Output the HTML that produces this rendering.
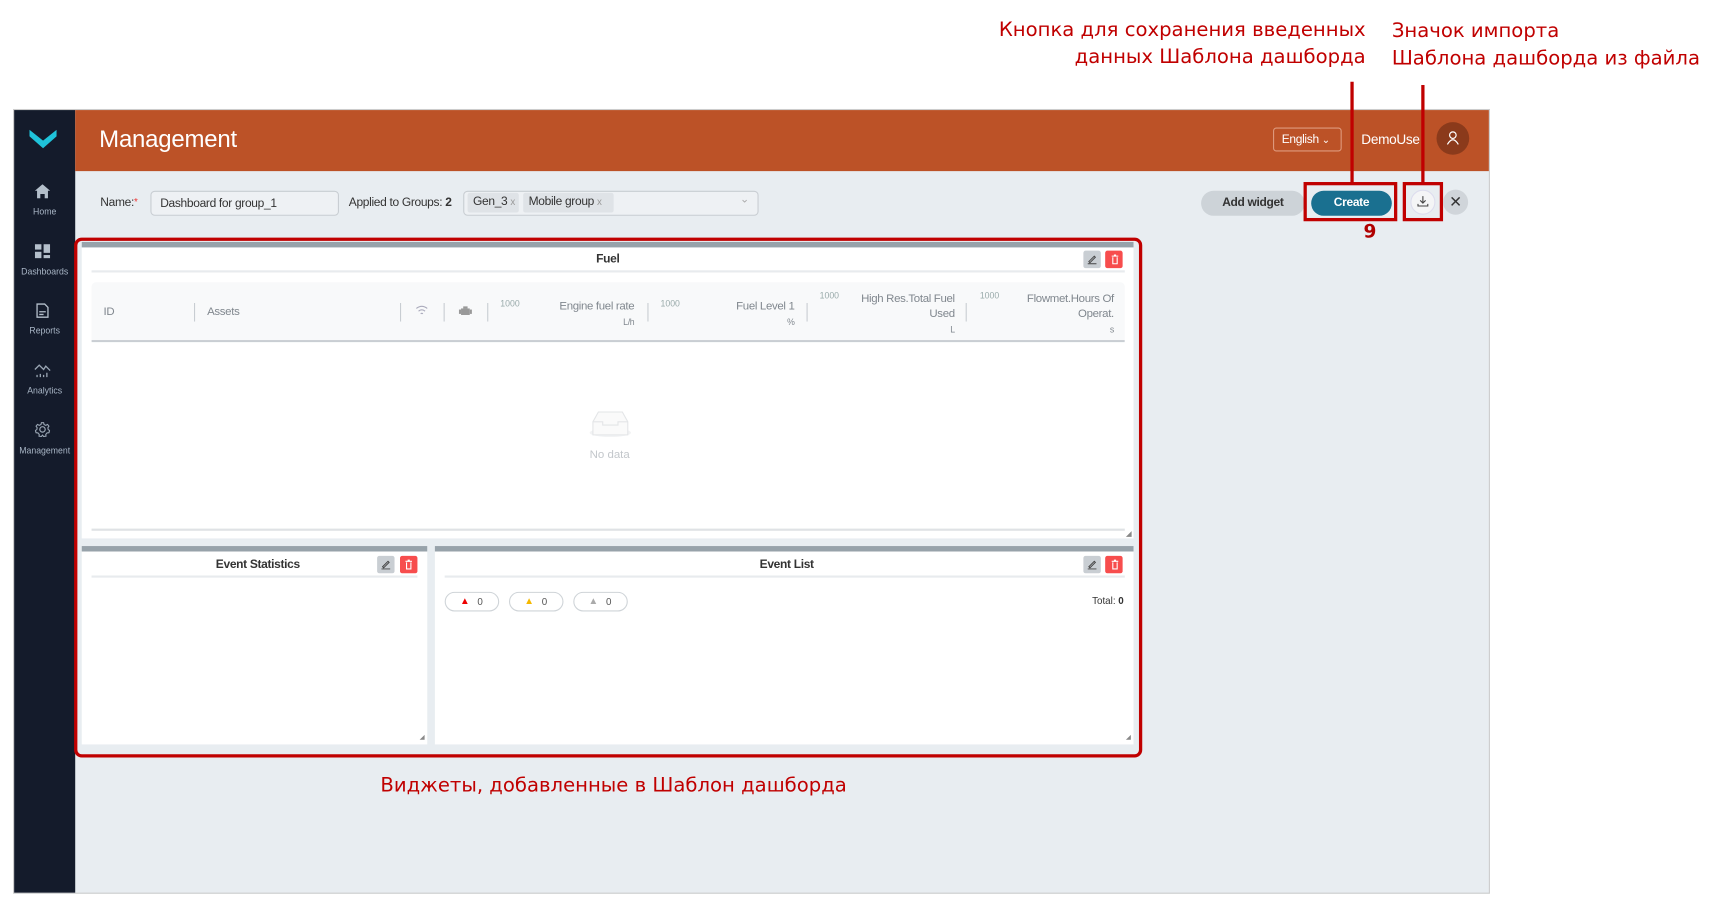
<!DOCTYPE html>
<html><head><meta charset="utf-8"><style>
*{box-sizing:border-box;margin:0;padding:0}
html,body{width:1709px;height:897px;overflow:hidden;background:#fff}
#w{position:absolute;left:0;top:0;width:1568px;height:823px;transform:scale(1.08992);transform-origin:0 0;font-family:"Liberation Sans",sans-serif;}
.a{position:absolute}
.ann{position:absolute;font-family:"DejaVu Sans","Liberation Sans",sans-serif;font-size:18px;color:#c00000;line-height:25px;white-space:nowrap}
.ui{font-size:11px;color:#333;letter-spacing:-0.3px}
.nav{position:absolute;left:13px;width:56px;text-align:center;color:#a9b6c6;font-size:8px}
.wd{position:absolute;background:#fff;border-top:5px solid #97a2aa}
.tt{position:absolute;font-size:11px;font-weight:bold;color:#333;letter-spacing:-0.3px}
.sep{position:absolute;height:2px;background:#e8ebee}
.be{position:absolute;width:16px;height:16px;border-radius:2px;background:#c9ced3}
.bd{position:absolute;width:16px;height:16px;border-radius:2px;background:#f74d4d}
.th{position:absolute;font-size:10.5px;color:#80878e;letter-spacing:-0.3px;text-align:right;line-height:14px}
.k{position:absolute;font-size:8px;color:#9aa;}
.vs{position:absolute;width:1px;height:17px;background:#c8cdd2}
.pill{position:absolute;top:543px;width:50px;height:18px;border:1px solid #cfd4d8;border-radius:9px;background:#fff;font-size:9px;color:#555}
.rb{position:absolute;border:3px solid #c00000}
</style></head><body><div id="w">
<div class="ann" style="right:315px;top:15px;text-align:right">Кнопка для сохранения введенных<br>данных Шаблона дашборда</div>
<div class="ann" style="left:1277px;top:16px">Значок импорта<br>Шаблона дашборда из файла</div>

<div class="a" style="left:12px;top:100px;width:1355px;height:720px;border:1px solid #ccc;background:#e8edf1"></div>
<div class="a" style="left:13px;top:101px;width:56px;height:718px;background:#141b2b"></div>
<svg class="a" style="left:27px;top:117px" width="25" height="20" viewBox="0 0 25 20"><path d="M0 2 L12.5 12 L25 2 L25 8 L12.5 19 L0 8Z" fill="#1fc3da"/></svg>
<svg class="a" style="left:32px;top:169px" width="14" height="13"><path d="M7 0 L14 6 H12 V13 H9 V9 H5 V13 H2 V6 H0Z" fill="#b4bfcb"/></svg>
<div class="nav" style="top:190px">Home</div>
<svg class="a" style="left:32px;top:224px" width="14" height="13"><rect x="0" y="0" width="6" height="5" fill="#b4bfcb"/><rect x="8" y="0" width="6" height="8" fill="#b4bfcb"/><rect x="0" y="7" width="6" height="6" fill="#b4bfcb"/><rect x="8" y="10" width="6" height="3" fill="#b4bfcb"/></svg>
<div class="nav" style="top:245px">Dashboards</div>
<svg class="a" style="left:33px;top:278px" width="12" height="14"><path d="M1 1H8L11 4V13H1Z M3 8H9 M3 10.5H7" fill="none" stroke="#b4bfcb" stroke-width="1.2"/></svg>
<div class="nav" style="top:299px">Reports</div>
<svg class="a" style="left:31px;top:333px" width="16" height="14"><path d="M1 6 L5 2 L9 6 L11 3 L15 7" fill="none" stroke="#9aa6b4" stroke-width="1.2"/><path d="M3 13V11 M6 13V10 M9 13V11 M12 13V9" stroke="#9aa6b4" stroke-width="1.2"/></svg>
<div class="nav" style="top:354px">Analytics</div>
<svg class="a" style="left:32px;top:387px" width="14" height="14" viewBox="0 0 14 14"><circle cx="7" cy="7" r="2.5" fill="none" stroke="#9aa6b4" stroke-width="1.1"/><path d="M6 0.8H8L8.4 2.5L10 3.3L11.6 2.4L12.9 4L11.9 5.5L12.2 7L13.5 8L12.9 10L11.2 10.2L10 11.6L10.2 13.2L8 13.5L7 12.2L6 13.5L3.8 13.2L4 11.6L2.8 10.2L1.1 10L0.5 8L1.8 7L2.1 5.5L1.1 4L2.4 2.4L4 3.3L5.6 2.5Z" fill="none" stroke="#9aa6b4" stroke-width="1"/></svg>
<div class="nav" style="top:409px">Management</div>

<div class="a" style="left:69px;top:101px;width:1297px;height:56px;background:#bc5227"></div>
<div class="a" style="left:91px;top:115px;font-size:22px;color:#fff;letter-spacing:-0.2px">Management</div>
<div class="a" style="left:1168px;top:117px;width:63px;height:22px;border:1px solid #de9a7e;border-radius:3px;color:#fff;font-size:11px;padding:4px 0 0 7px;letter-spacing:-0.3px">English <span style="font-size:9px">&#8964;</span></div>
<div class="a" style="left:1249px;top:121px;color:#fff;font-size:12.5px;letter-spacing:-0.3px">DemoUse</div>
<div class="a" style="left:1318px;top:112px;width:30px;height:30px;border-radius:50%;background:#8b3a1b"></div>
<svg class="a" style="left:1327px;top:120px" width="12" height="13"><circle cx="6" cy="4" r="3" fill="none" stroke="#fff" stroke-width="1.1"/><path d="M1 12.5 Q6 4 11 12.5" fill="none" stroke="#fff" stroke-width="1.1"/></svg>

<div class="a ui" style="left:92px;top:180px">Name:<span style="color:#e33;font-size:9px;vertical-align:top">*</span></div>
<div class="a ui" style="left:138px;top:175px;width:173px;height:23px;border:1px solid #c8cdd2;border-radius:4px;background:#eef1f4;padding:5px 0 0 8px">Dashboard for group_1</div>
<div class="a ui" style="left:320px;top:180px">Applied to Groups: <b>2</b></div>
<div class="a" style="left:425px;top:175px;width:271px;height:23px;border:1px solid #c8cdd2;border-radius:4px;background:#eef1f4"></div>
<div class="a ui" style="left:429px;top:177px;width:47px;height:18px;background:#dfe3e7;border-radius:2px;padding:2px 0 0 5px">Gen_3 <span style="color:#999;font-size:9px">x</span></div>
<div class="a ui" style="left:480px;top:177px;width:83px;height:18px;background:#dfe3e7;border-radius:2px;padding:2px 0 0 5px">Mobile group <span style="color:#999;font-size:9px">x</span></div>
<div class="a" style="left:679px;top:178px;color:#aaa;font-size:10px">&#8964;</div>

<div class="a ui" style="left:1102px;top:175px;width:95px;height:23px;border-radius:12px;background:#cdd3d8;text-align:center;padding-top:5px;font-weight:bold;color:#333">Add widget</div>
<div class="a ui" style="left:1203px;top:175px;width:74px;height:23px;border-radius:12px;background:#1a7090;text-align:center;padding-top:5px;font-weight:bold;color:#fff">Create</div>
<div class="rb" style="left:1196px;top:167px;width:86px;height:36px"></div>
<div class="a" style="left:1251px;top:203px;font-size:17px;font-weight:bold;color:#b00000;font-family:'DejaVu Sans',sans-serif">9</div>
<div class="a" style="left:1294px;top:174px;width:23px;height:23px;border-radius:50%;background:#f4f5f6;border:1px solid #dde"></div>
<svg class="a" style="left:1300px;top:179px" width="11" height="11"><path d="M5.5 1V7 M3 4.8L5.5 7.3L8 4.8 M1 8V10H10V8" fill="none" stroke="#444" stroke-width="1"/></svg>
<div class="rb" style="left:1287px;top:167px;width:37px;height:36px"></div>
<div class="a" style="left:1324px;top:174px;width:23px;height:23px;border-radius:50%;background:#d0d5da;text-align:center;font-size:14px;color:#333;line-height:22px">✕</div>

<div class="wd" style="left:75px;top:222px;width:965px;height:272px"></div>
<div class="tt" style="left:547px;top:232px">Fuel</div>
<div class="be" style="left:994px;top:230px"></div><div class="bd" style="left:1014px;top:230px"></div>
<div class="sep" style="left:84px;top:248px;width:948px"></div>
<div class="a" style="left:84px;top:259px;width:948px;height:55px;background:#f8f9fa;border-bottom:2px solid #c9ced3;border-radius:4px 4px 0 0"></div>
<div class="th" style="left:95px;top:279px">ID</div>
<div class="vs" style="left:178px;top:278px"></div>
<div class="th" style="left:190px;top:279px">Assets</div>
<div class="vs" style="left:367px;top:278px"></div>
<svg class="a" style="left:381px;top:280px" width="12" height="10"><path d="M1 3Q6 -1 11 3 M3 5.5Q6 3 9 5.5 M5 8Q6 7 7 8" fill="none" stroke="#aab" stroke-width="1"/></svg>
<div class="vs" style="left:407px;top:278px"></div>
<svg class="a" style="left:421px;top:281px" width="12" height="9"><rect x="2" y="2" width="8" height="6" fill="#999"/><rect x="4" y="0" width="4" height="2" fill="#999"/><rect x="0" y="3" width="2" height="4" fill="#999"/><rect x="10" y="3" width="2" height="4" fill="#999"/></svg>
<div class="vs" style="left:447px;top:278px"></div>
<div class="k" style="left:459px;top:274px">1000</div>
<div class="th" style="left:480px;top:274px;width:102px">Engine fuel rate<br><span style="font-size:8px">L/h</span></div>
<div class="vs" style="left:594px;top:278px"></div>
<div class="k" style="left:606px;top:274px">1000</div>
<div class="th" style="left:630px;top:274px;width:99px">Fuel Level 1<br><span style="font-size:8px">%</span></div>
<div class="vs" style="left:740px;top:278px"></div>
<div class="k" style="left:752px;top:267px">1000</div>
<div class="th" style="left:776px;top:267px;width:100px">High Res.Total Fuel<br>Used<br><span style="font-size:8px">L</span></div>
<div class="vs" style="left:886px;top:278px"></div>
<div class="k" style="left:899px;top:267px">1000</div>
<div class="th" style="left:922px;top:267px;width:100px">Flowmet.Hours Of<br>Operat.<br><span style="font-size:8px">s</span></div>
<svg class="a" style="left:540px;top:373px" width="40" height="30"><ellipse cx="20" cy="24" rx="19" ry="4" fill="#f2f3f4"/><path d="M4 14L9 5H31L36 14V26H4Z" fill="#fafafa" stroke="#e3e5e7"/><path d="M4 14H13V17H27V14H36" fill="none" stroke="#e3e5e7"/></svg>
<div class="a" style="left:541px;top:411px;font-size:10.5px;color:#c3c7cb">No data</div>
<div class="a" style="left:84px;top:485px;width:948px;height:2px;background:#dfe2e5"></div>
<div class="a" style="left:1033px;top:486px;font-size:7px;color:#888">◢</div>

<div class="wd" style="left:75px;top:501px;width:317px;height:182px"></div>
<div class="tt" style="left:198px;top:512px">Event Statistics</div>
<div class="be" style="left:346px;top:510px"></div><div class="bd" style="left:367px;top:510px"></div>
<div class="sep" style="left:84px;top:528px;width:299px"></div>
<div class="a" style="left:385px;top:673px;font-size:6px;color:#888">◢</div>

<div class="wd" style="left:399px;top:501px;width:641px;height:182px"></div>
<div class="tt" style="left:697px;top:512px">Event List</div>
<div class="be" style="left:994px;top:510px"></div><div class="bd" style="left:1014px;top:510px"></div>
<div class="sep" style="left:408px;top:528px;width:624px"></div>
<div class="pill" style="left:408px"><span style="position:absolute;left:13px;top:2px;color:#e00;font-size:9px">▲</span><span style="position:absolute;left:29px;top:3px">0</span></div>
<div class="pill" style="left:467px"><span style="position:absolute;left:13px;top:2px;color:#f5b800;font-size:9px">▲</span><span style="position:absolute;left:29px;top:3px">0</span></div>
<div class="pill" style="left:526px"><span style="position:absolute;left:13px;top:2px;color:#aaa;font-size:9px">▲</span><span style="position:absolute;left:29px;top:3px">0</span></div>
<div class="a" style="left:1002px;top:546px;font-size:9px;color:#333">Total: <b>0</b></div>
<div class="a" style="left:1033px;top:673px;font-size:6px;color:#888">◢</div>

<div class="a" style="left:68px;top:218px;width:980px;height:477px;border:3px solid #c00000;border-radius:7px"></div>
<div class="ann" style="left:349px;top:708px">Виджеты, добавленные в Шаблон дашборда</div>
<svg class="a" style="left:997px;top:233px" width="10" height="10"><path d="M1 9H9 M2 7L7 2L8 3L3 8Z" fill="none" stroke="#444" stroke-width="0.9"/></svg>
<svg class="a" style="left:1018px;top:233px" width="10" height="10"><path d="M2 2H8 M4 1H6 M3 3V9H7V3" fill="none" stroke="#fff" stroke-width="1"/></svg>
<svg class="a" style="left:349px;top:513px" width="10" height="10"><path d="M1 9H9 M2 7L7 2L8 3L3 8Z" fill="none" stroke="#444" stroke-width="0.9"/></svg>
<svg class="a" style="left:370px;top:513px" width="10" height="10"><path d="M2 2H8 M4 1H6 M3 3V9H7V3" fill="none" stroke="#fff" stroke-width="1"/></svg>
<svg class="a" style="left:997px;top:513px" width="10" height="10"><path d="M1 9H9 M2 7L7 2L8 3L3 8Z" fill="none" stroke="#444" stroke-width="0.9"/></svg>
<svg class="a" style="left:1018px;top:513px" width="10" height="10"><path d="M2 2H8 M4 1H6 M3 3V9H7V3" fill="none" stroke="#fff" stroke-width="1"/></svg>

<div class="a" style="left:1239px;top:75px;width:3px;height:94px;background:#c00000"></div>
<div class="a" style="left:1304px;top:78px;width:3px;height:91px;background:#c00000"></div>
</div></body></html>
